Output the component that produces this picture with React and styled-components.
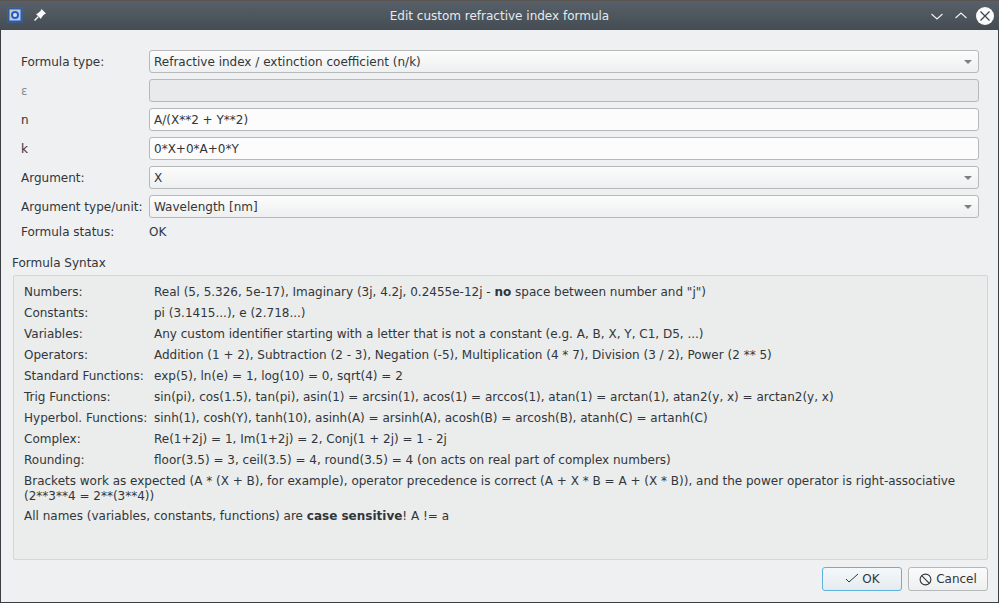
import React from "react";
import styled, { createGlobalStyle } from "styled-components";

const Global = createGlobalStyle`
  html, body { margin: 0; padding: 0; background: #3a3f44; }
  body { font-family: "DejaVu Sans", sans-serif; font-size: 12px; color: #31363b; }
`;
const Win = styled.div`
  width: 999px; height: 603px; display: flex; flex-direction: column; overflow: hidden; box-sizing: border-box;
  border-top: 1px solid #5a5450;
`;
const TitleBar = styled.header`
  height: 29px; flex: none; display: flex; align-items: center; padding: 0 5px 0 7px;
  background: linear-gradient(#576069, #454c53); color: #eff0f1; position: relative;
`;
const Title = styled.div`
  flex: 1; text-align: center; font-size: 12px; padding-left: 22px; color: #e8eaec;
`;
const TitleIcon = styled.svg`
  width: 16px; height: 16px; display: block; flex: none; margin-bottom: 1px;
`;
const PinIcon = styled(TitleIcon)` margin-left: 10px; width: 14px; height: 14px; `;
const Ctrl = styled.svg`
  width: 14px; height: 14px; display: block; flex: none; margin-right: 10px;
`;
const CloseBtn = styled.div`
  width: 18px; height: 18px; border-radius: 50%; background: #fbfbfb; display: flex; align-items: center; justify-content: center;
  margin-left: -2px;
`;
const Body = styled.main`
  flex: 1; background: #eff0f1; margin: 0 1px 1px 1px; padding: 20px 10px 11px 11px; display: flex; flex-direction: column; min-height: 0;
`;
const Form = styled.div`
  display: grid; grid-template-columns: 128px 1fr; row-gap: 6px; padding: 0 9px 0 9px;
  align-items: center;
`;
const Label = styled.div`
  color: ${p => (p.$disabled ? "#8a8e92" : "#31363b")};
  height: ${p => (p.$short ? 15 : 23)}px; line-height: ${p => (p.$short ? 15 : 23)}px;
  box-sizing: border-box; padding-top: 1px; white-space: nowrap;
`;
const Input = styled.div`
  height: 23px; box-sizing: border-box; border: 1px solid #b6b8ba; border-radius: 3px;
  background: ${p => (p.$disabled ? "#e9eaeb" : "#fcfcfc")}; padding: 0 4px; line-height: 22px;
`;
const Combo = styled.div`
  height: 23px; box-sizing: border-box; border: 1px solid #b6b8ba; border-radius: 3px;
  background: linear-gradient(#fcfcfc, #eeeff0); padding: 2px 5px 0 4px; line-height: 21px;
  display: flex; justify-content: space-between; align-items: center;
`;
const Arrow = styled.span`
  width: 0; height: 0; border-left: 4px solid transparent; border-right: 4px solid transparent; border-top: 4px solid #7c7f82;
  margin: -2px 1px 0 0;
`;
const Status = styled.div`
  line-height: 15px; height: 15px; box-sizing: border-box; padding-top: 1px;
`;
const GroupTitle = styled.div`
  margin-top: 16px; line-height: 17px; color: #31363b;
`;
const Group = styled.section`
  flex: 1; margin-top: 3px; margin-left: 1px; border: 1px solid #d3d5d7; border-radius: 2px; background: #ebecec;
  padding: 5px 10px 0 10px; min-height: 0; width: 975px; box-sizing: border-box;
`;
const SyntaxGrid = styled.div`
  display: grid; grid-template-columns: 130px 1fr; grid-auto-rows: 21px; align-items: center;
  white-space: nowrap;
`;
const Note = styled.p`
  margin: ${p => p.$top}px 0 0 0; line-height: 15px; width: 948px;
`;
const Footer = styled.footer`
  flex: none; display: flex; justify-content: flex-end; gap: 6px; margin-top: 7px;
`;
const Btn = styled.button`
  width: 80px; height: 24px; box-sizing: border-box; border-radius: 3px; font: inherit; color: #31363b; padding: 0;
  display: flex; align-items: center; justify-content: center; gap: ${p => (p.$primary ? 2 : 4)}px;
  border: 1px solid ${p => (p.$primary ? "#5fb2e0" : "#b6b8ba")};
  background: ${p => (p.$primary ? "linear-gradient(#f4f8fa, #e4ebef)" : "linear-gradient(#fbfbfb, #eeeff0)")};
`;

const rows = [
  ["Numbers:", <>Real (5, 5.326, 5e-17), Imaginary (3j, 4.2j, 0.2455e-12j - <b>no</b> space between number and "j")</>],
  ["Constants:", "pi (3.1415...), e (2.718...)"],
  ["Variables:", "Any custom identifier starting with a letter that is not a constant (e.g. A, B, X, Y, C1, D5, ...)"],
  ["Operators:", "Addition (1 + 2), Subtraction (2 - 3), Negation (-5), Multiplication (4 * 7), Division (3 / 2), Power (2 ** 5)"],
  ["Standard Functions:", "exp(5), ln(e) = 1, log(10) = 0, sqrt(4) = 2"],
  ["Trig Functions:", "sin(pi), cos(1.5), tan(pi), asin(1) = arcsin(1), acos(1) = arccos(1), atan(1) = arctan(1), atan2(y, x) = arctan2(y, x)"],
  ["Hyperbol. Functions:", "sinh(1), cosh(Y), tanh(10), asinh(A) = arsinh(A), acosh(B) = arcosh(B), atanh(C) = artanh(C)"],
  ["Complex:", "Re(1+2j) = 1, Im(1+2j) = 2, Conj(1 + 2j) = 1 - 2j"],
  ["Rounding:", "floor(3.5) = 3, ceil(3.5) = 4, round(3.5) = 4 (on acts on real part of complex numbers)"],
];

export default function App() {
  return (
    <Win>
      <Global />
      <TitleBar>
        <TitleIcon viewBox="0 0 16 16">
          <rect x="0.5" y="0.5" width="15" height="15" fill="none" stroke="#2a6fd6" strokeDasharray="1 1" opacity="0.8" />
          <rect x="1.5" y="1.5" width="13" height="13" fill="#1d5fd0" />
          <rect x="2.5" y="2.5" width="11" height="11" fill="#c4c8cc" />
          <circle cx="8" cy="8" r="3" fill="#dfe3e8" stroke="#1d5fd0" strokeWidth="2" />
        </TitleIcon>
        <PinIcon viewBox="0 0 14 14">
          <path d="M8.5 1 L13 5.5 L11 6.5 L8.5 9.5 L8 11 L3 6 L4.5 5.5 L7.5 3 Z" fill="#fcfcfc" />
          <path d="M5.2 8.8 L1.5 12.5" stroke="#fcfcfc" strokeWidth="1.3" />
        </PinIcon>
        <Title>Edit custom refractive index formula</Title>
        <Ctrl viewBox="0 0 14 14" fill="none" stroke="#f2f3f4" strokeWidth="1.1"><path d="M1.5 5 L7 10 L12.5 5" /></Ctrl>
        <Ctrl viewBox="0 0 14 14" fill="none" stroke="#f2f3f4" strokeWidth="1.1"><path d="M1.5 9 L7 4 L12.5 9" /></Ctrl>
        <CloseBtn>
          <svg width="12" height="12" viewBox="0 0 12 12" fill="none" stroke="#3f464c" strokeWidth="1.3"><path d="M1.5 1.5 L10.5 10.5 M10.5 1.5 L1.5 10.5" /></svg>
        </CloseBtn>
      </TitleBar>
      <Body>
        <Form>
          <Label>Formula type:</Label>
          <Combo>Refractive index / extinction coefficient (n/k)<Arrow /></Combo>
          <Label $disabled>ε</Label>
          <Input $disabled />
          <Label>n</Label>
          <Input>A/(X**2 + Y**2)</Input>
          <Label>k</Label>
          <Input>0*X+0*A+0*Y</Input>
          <Label>Argument:</Label>
          <Combo>X<Arrow /></Combo>
          <Label>Argument type/unit:</Label>
          <Combo>Wavelength [nm]<Arrow /></Combo>
          <Label $short>Formula status:</Label>
          <Status>OK</Status>
        </Form>
        <GroupTitle>Formula Syntax</GroupTitle>
        <Group>
          <SyntaxGrid>
            {rows.map(([k, v]) => (
              <React.Fragment key={k}>
                <div>{k}</div>
                <div>{v}</div>
              </React.Fragment>
            ))}
          </SyntaxGrid>
          <Note $top={4}>Brackets work as expected (A * (X + B), for example), operator precedence is correct (A + X * B = A + (X * B)), and the power operator is right-associative (2**3**4 = 2**(3**4))</Note>
          <Note $top={5}>All names (variables, constants, functions) are <b>case sensitive</b>! A != a</Note>
        </Group>
        <Footer>
          <Btn $primary>
            <svg width="16" height="16" viewBox="0 0 16 16" fill="none" stroke="#31363b" strokeWidth="1"><path d="M2 8 L5 11 L14 3" /></svg>
            OK
          </Btn>
          <Btn>
            <svg width="13" height="13" viewBox="0 0 13 13" fill="none" stroke="#31363b" strokeWidth="1.1"><circle cx="6.5" cy="6.5" r="5.4" /><path d="M2.7 2.7 L10.3 10.3" /></svg>
            Cancel
          </Btn>
        </Footer>
      </Body>
    </Win>
  );
}
